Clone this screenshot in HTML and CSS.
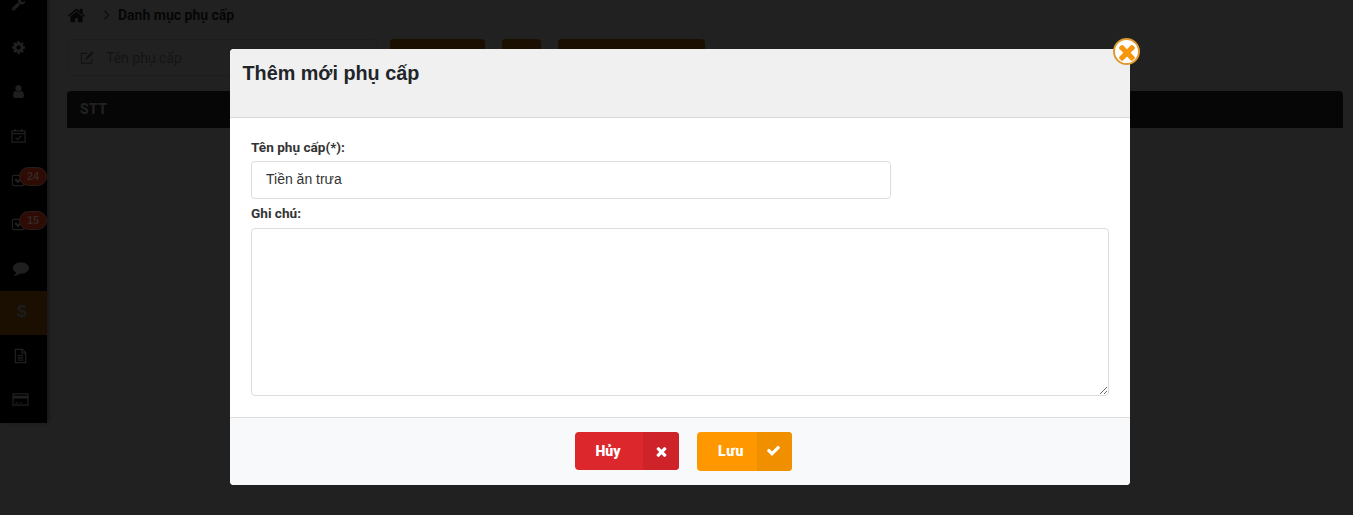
FILE: index.html
```html
<!DOCTYPE html>
<html lang="vi">
<head>
<meta charset="utf-8">
<title>Danh mục phụ cấp</title>
<link rel="stylesheet" href="styles.css">
</head>
<body>
<div class="app">
  <nav class="sidebar">
    <a class="nav-item"><svg class="nav-icon" viewBox="0 0 1792 1792"><path d="M448 1472q0-26-19-45t-45-19-45 19-19 45 19 45 45 19 45-19 19-45zm644-420l-682 682q-37 37-90 37-52 0-91-37l-106-108q-38-36-38-90 0-53 38-91l681-681q39 98 114.5 173.5t173.5 114.5zm634-435q0 39-23 106-47 134-164.5 217.5t-258.5 83.5q-185 0-316.5-131.5t-131.5-316.5 131.5-316.5 316.5-131.5q58 0 121.5 16.5t107.5 46.5q16 11 16 28t-16 28l-293 169v224l193 107q5-3 79-48.5t135.5-81 70.5-35.5q15 0 23.5 10t8.5 25z"/></svg></a>
    <a class="nav-item"><svg class="nav-icon" viewBox="0 0 1792 1792"><path d="M1152 896q0-106-75-181t-181-75-181 75-75 181 75 181 181 75 181-75 75-181zm512-109v222q0 12-8 23t-20 13l-185 28q-19 54-39 91 35 50 107 138 10 12 10 25t-9 23q-27 37-99 108t-94 71q-12 0-26-9l-138-108q-44 23-91 38-16 136-29 186-7 28-36 28h-222q-14 0-24.5-8.5t-11.5-21.5l-28-184q-49-16-90-37l-141 107q-10 9-25 9-14 0-25-11-126-114-165-168-7-10-7-23 0-12 8-23 15-21 51-66.5t54-70.5q-27-50-41-99l-183-27q-13-2-21-12.5t-8-23.5v-222q0-12 8-23t19-13l186-28q14-46 39-92-40-57-107-138-10-12-10-24 0-10 9-23 26-36 98.5-107.5t94.5-71.5q13 0 26 10l138 107q44-23 91-38 16-136 29-186 7-28 36-28h222q14 0 24.5 8.5t11.5 21.5l28 184q49 16 90 37l142-107q9-9 24-9 13 0 25 10 129 119 165 170 7 8 7 22 0 12-8 23-15 21-51 66.5t-54 70.5q26 50 41 98l183 28q13 2 21 12.5t8 23.5z"/></svg></a>
    <a class="nav-item"><svg class="nav-icon" viewBox="0 0 1792 1792"><path d="M1536 1399q0 109-62.5 187t-150.5 78h-854q-88 0-150.5-78t-62.5-187q0-85 8.5-160.5t31.5-152 58.5-131 94-89 134.5-34.5q131 128 313 128t313-128q76 0 134.5 34.5t94 89 58.5 131 31.5 152 8.5 160.5zm-256-887q0 159-112.5 271.5t-271.5 112.5-271.5-112.5-112.5-271.5 112.5-271.5 271.5-112.5 271.5 112.5 112.5 271.5z"/></svg></a>
    <a class="nav-item"><svg class="nav-icon" viewBox="0 0 16 16"><path d="M1 3h14v12H1z" class="line"/><path d="M1 6h14M4.5 1v3M11.5 1v3" class="line"/><path d="M4.8 10.2l2.3 2.3 4-4.2" class="line"/></svg></a>
    <a class="nav-item"><svg class="nav-icon" viewBox="0 0 16 16"><path d="M13.5 9v4a1.5 1.5 0 0 1-1.5 1.5H3A1.5 1.5 0 0 1 1.5 13V5A1.5 1.5 0 0 1 3 3.5h8" class="line"/><path d="M4.5 7.5l3 3 7-7" class="line thick"/></svg><span class="badge">24</span></a>
    <a class="nav-item"><svg class="nav-icon" viewBox="0 0 16 16"><path d="M13.5 9v4a1.5 1.5 0 0 1-1.5 1.5H3A1.5 1.5 0 0 1 1.5 13V5A1.5 1.5 0 0 1 3 3.5h8" class="line"/><path d="M4.5 7.5l3 3 7-7" class="line thick"/></svg><span class="badge">15</span></a>
    <a class="nav-item"><svg class="nav-icon big" viewBox="0 0 1792 1792"><path d="M1792 896q0 174-120 321.5t-326 233-450 85.5q-70 0-145-8-198 175-460 242-49 14-114 22-17 2-30.5-9t-17.5-29v-1q-3-4-.5-12t2-10 4.5-9.5l6-9 7-8.5 8-9q7-8 31-34.5t34.5-38 31-39.5 32.5-51 27-59 26-76q-157-89-247.5-220t-90.5-281q0-130 71-248.5t191-204.5 286-136.5 348-50.5q244 0 450 85.5t326 233 120 321.5z"/></svg></a>
    <a class="nav-item active"><span class="nav-dollar">$</span></a>
    <a class="nav-item"><svg class="nav-icon file" viewBox="0 0 16 16"><path d="M2.5 1h7.5l3.5 3.5V15h-11z" class="line"/><path d="M9.5 1v4h4M5 7.5h6M5 10h6M5 12.5h6" class="line"/></svg></a>
    <a class="nav-item"><svg class="nav-icon wide" viewBox="0 0 18 16"><path d="M1 2h16v12H1z" class="line"/><path d="M1 4h16v3H1z"/><path d="M3.5 11.5h3M8 11.5h2" class="line"/></svg></a>
  </nav>
  <main class="content">
    <div class="crumbs">
      <svg class="home" viewBox="0 0 1792 1792"><path d="M1472 992v480q0 26-19 45t-45 19h-384v-384h-256v384h-384q-26 0-45-19t-19-45v-480q0-1 .5-3t.5-3l575-474 575 474q1 2 1 6zm223-69l-62 74q-8 9-21 11h-3q-13 0-21-7l-692-577-692 577q-12 8-24 7-13-2-21-11l-62-74q-8-10-7-23.5t11-21.5l719-599q32-26 76-26t76 26l244 204v-195q0-14 9-23t23-9h192q14 0 23 9t9 23v408l219 182q10 8 11 21.5t-7 23.5z"/></svg>
      <svg class="chev" viewBox="0 0 8 12"><path d="M1.5 1l5 5-5 5"/></svg>
      <span class="crumb-text">Danh mục phụ cấp</span>
    </div>
    <div class="toolbar">
      <div class="search">
        <svg class="search-icon" viewBox="0 0 16 16"><path d="M12.5 9.5V14h-11V3.5H8" class="line"/><path d="M5.5 10.5l.6-2.6L12.8 1.2l2 2-6.700 6.700z"/></svg>
        <span class="search-text">Tên phụ cấp</span>
      </div>
      <span class="tool-btn w95"></span>
      <span class="tool-btn w39"></span>
      <span class="tool-btn w147"></span>
    </div>
    <div class="thead">STT</div>
  </main>
</div>
<div class="backdrop"></div>
<section class="modal">
  <header class="modal-head"><h2 class="modal-title">Thêm mới phụ cấp</h2></header>
  <div class="modal-body">
    <label class="field-label">Tên phụ cấp(*):</label>
    <input class="field-input" type="text" value="Tiền ăn trưa">
    <label class="field-label second">Ghi chú:</label>
    <textarea class="field-area"></textarea>
  </div>
  <footer class="modal-foot">
    <button class="act act-red"><span class="act-label">Hủy</span><span class="act-icon"><svg viewBox="0 0 1792 1792"><path d="M1490 1322q0 40-28 68l-136 136q-28 28-68 28t-68-28l-294-294-294 294q-28 28-68 28t-68-28l-136-136q-28-28-28-68t28-68l294-294-294-294q-28-28-28-68t28-68l136-136q28-28 68-28t68 28l294 294 294-294q28-28 68-28t68 28l136 136q28 28 28 68t-28 68l-294 294 294 294q28 28 28 68z"/></svg></span></button>
    <button class="act act-orange"><span class="act-label">Lưu</span><span class="act-icon"><svg viewBox="0 0 1792 1792"><path d="M1671 566q0 40-28 68l-724 724-136 136q-28 28-68 28t-68-28l-136-136-362-362q-28-28-28-68t28-68l136-136q28-28 68-28t68 28l294 295 656-657q28-28 68-28t68 28l136 136q28 28 28 68z"/></svg></span></button>
  </footer>
  <button class="close"><svg viewBox="0 0 1792 1792"><path d="M1490 1322q0 40-28 68l-136 136q-28 28-68 28t-68-28l-294-294-294 294q-28 28-68 28t-68-28l-136-136q-28-28-28-68t28-68l294-294-294-294q-28-28-28-68t28-68l136-136q28-28 68-28t68 28l294 294 294-294q28-28 68-28t68 28l136 136q28 28 28 68t-28 68l-294 294 294 294q28 28 28 68z"/></svg></button>
</section>
</body>
</html>
```
FILE: styles.css
```css
* { box-sizing: border-box; }
html, body { margin: 0; height: 515px; overflow: hidden; }
body { background: #fff; font-family: Roboto, "Liberation Sans", sans-serif; color: #212529; }

.app { display: flex; height: 515px; }
.sidebar { width: 47px; flex: none; margin-top: -17px; align-self: flex-start; background: #000; box-shadow: 2px 0 4px rgba(0,0,0,.35); }
.nav-item { display: flex; align-items: center; height: 44px; padding: 0 0 2px 11px; color: #fff; border-bottom: 1px solid #141414; }
.nav-item.active { background: #c87400; border-bottom-color: #c87400; }
.nav-icon { width: 15px; height: 15px; fill: #f0f0f0; }
.nav-icon.big { width: 16px; height: 16px; margin-left: 2px; }
.nav-icon.file { margin-left: 2px; height: 16px; }
.nav-icon.wide { width: 17px; height: 15px; margin-left: 1px; }
.nav-dollar { font: 700 17px "Liberation Sans", sans-serif; color: #d8d8d8; margin-left: 6px; }
.line { fill: none; stroke: #f0f0f0; stroke-width: 1.3; }
.line.thick { stroke-width: 2.4; }
.badge { position: absolute; z-index: 5; left: 19px; width: 28px; height: 19px; margin-top: -7px; border-radius: 10px; background: #2e0c05; border: 1px solid #2a1e1a; color: #352723; font: 700 11px/17px "Liberation Sans", sans-serif; text-align: center; }

.content { flex: 1; padding: 0 10px 0 20px; min-width: 0; }
.crumbs { display: flex; align-items: center; height: 30px; }
.home { width: 19px; height: 19px; fill: #333; }
.chev { width: 7px; height: 10px; margin: 0 8px 0 17px; fill: none; stroke: #666; stroke-width: 1.6; }
.crumb-text { font-size: 14px; font-weight: 700; color: #333; }

.toolbar { display: flex; margin-top: 9px; height: 38px; }
.search { display: flex; align-items: center; width: 309px; height: 37px; margin-left: 1px; padding-left: 11px; border: 1px solid #ddd; border-radius: 5px; background: #fff; }
.search-icon { width: 15px; height: 15px; fill: #888; }
.search-icon .line { stroke: #888; }
.search-text { margin-left: 11px; font-size: 14px; color: #999; }
.tool-btn { display: block; height: 38px; background: #c87400; border-radius: 4px; }
.w95 { width: 95px; margin-left: 13px; }
.w39 { width: 39px; margin-left: 17px; }
.w147 { width: 147px; margin-left: 17px; }

.thead { margin-top: 14px; height: 37px; padding-left: 13px; background: #303030; border-radius: 4px 4px 0 0; color: #fff; font-size: 14px; font-weight: 700; line-height: 37px; letter-spacing: .4px; }

.backdrop { position: fixed; inset: 0; z-index: 2; background: rgba(0,0,0,.87); }

.modal { position: absolute; z-index: 3; left: 230px; top: 49px; width: 900px; height: 436px; display: flex; flex-direction: column; background: #fff; border-radius: 4px; }
.modal-head { height: 69px; flex: none; padding: 12px 12.5px 0; background: #f0f0f0; border-bottom: 1px solid #d8d8d8; border-radius: 4px 4px 0 0; }
.modal-title { margin: 0; font: 700 19.8px/24px "Liberation Sans", sans-serif; color: #212529; }
.modal-body { flex: 1; padding: 21px 21px 0; display: flex; flex-direction: column; align-items: flex-start; }
.field-label { height: 16px; font: 700 13.6px/16px Roboto, "Liberation Sans", sans-serif; color: #333; margin-bottom: 6px; }
.field-label.second { margin-top: 6px; margin-bottom: 7px; }
.field-input { width: 640px; height: 38px; padding: 0 14px 2px; border: 1px solid #ddd; border-radius: 4px; font: 400 14px "Liberation Sans", sans-serif; color: #333; background: #fff; outline: none; }
.field-area { width: 858px; height: 168px; padding: 8px 15px; border: 1px solid #ddd; border-radius: 4px; font: 400 14px "Liberation Sans", sans-serif; background: #fff; outline: none; }

.modal-foot { height: 68px; flex: none; display: flex; justify-content: center; align-items: flex-start; gap: 18px; padding: 14px 0 0 7px; background: #f8f9fa; border-top: 1px solid #ddd; border-radius: 0 0 4px 4px; }
.act { display: flex; padding: 0; height: 38px; border: 0; border-radius: 4px; overflow: hidden; color: #fff; font: 900 14px Roboto, sans-serif; }
.act-red { width: 104px; background: #dc272d; }
.act-orange { width: 95px; height: 39px; background: #ff9800; }
.act-label { flex: 1; line-height: 38px; text-align: center; }
.act-red .act-label { padding-right: 2px; }
.act-orange .act-label { padding-left: 8px; letter-spacing: .8px; }
.act-icon { display: flex; width: 36px; align-items: center; justify-content: center; }
.act-red .act-icon { background: #ce2329; }
.act-orange .act-icon { width: 35px; padding: 0 2px 2px 0; background: #f09000; }
.act-icon svg { width: 15px; height: 15px; fill: #fff; }

.close { position: absolute; right: -10px; top: -11px; width: 27px; height: 27px; padding: 0; display: flex; align-items: center; justify-content: center; background: #fff; border: 2px solid #e09a30; border-radius: 50%; }
.close svg { flex: none; width: 24px; height: 24px; fill: #f7960f; }
```
